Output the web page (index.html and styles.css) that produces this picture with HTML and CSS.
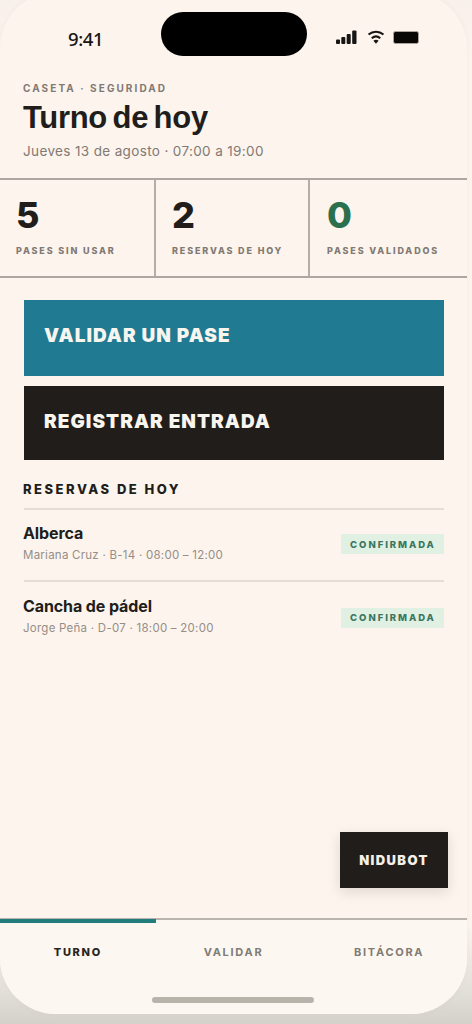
FILE: index.html
```html
<!DOCTYPE html>
<html lang="es">
<head>
<meta charset="utf-8">
<title>Turno de hoy</title>
<link rel="stylesheet" href="styles.css">
</head>
<body>
<main class="phone">
  <div class="status">
    <span class="time">9:41</span>
    <span class="island"></span>
    <svg class="signals" width="84" height="18" viewBox="0 0 84 18">
      <rect x="0" y="11.500" width="4" height="4.500" rx="1"/>
      <rect x="5.3" y="9" width="4" height="7" rx="1"/>
      <rect x="10.7" y="6" width="4" height="10" rx="1"/>
      <rect x="16.2" y="2.5" width="4.3" height="13.5" rx="1"/>
      <g class="waves"><path d="M32.5 6.6C37 2.7 43 2.7 47.500 6.600M35.700 10.200C38.300 8 41.700 8 44.300 10.200"/></g>
      <path d="M37.400 12.700q2.600-1.800 5.200 0L40 15.800z"/>
      <rect class="battery" x="57.500" y="3.500" width="25" height="12" rx="2"/>
    </svg>
  </div>
  <header class="heading">
    <p class="eyebrow">CASETA · SEGURIDAD</p>
    <h1 class="title">Turno de hoy</h1>
    <p class="date">Jueves 13 de agosto · 07:00 a 19:00</p>
  </header>
  <section class="stats">
    <div class="stat"><b class="number">5</b><span class="label">PASES SIN USAR</span></div>
    <div class="stat"><b class="number">2</b><span class="label">RESERVAS DE HOY</span></div>
    <div class="stat"><b class="number green">0</b><span class="label">PASES VALIDADOS</span></div>
  </section>
  <section class="content">
    <button class="action teal">VALIDAR UN PASE</button>
    <button class="action dark">REGISTRAR ENTRADA</button>
    <h2 class="subhead">RESERVAS DE HOY</h2>
    <div class="row">
      <div class="booking"><h3 class="place">Alberca</h3><p class="detail">Mariana Cruz · B-14 · 08:00 – 12:00</p></div>
      <span class="badge">CONFIRMADA</span>
    </div>
    <div class="row">
      <div class="booking"><h3 class="place">Cancha de pádel</h3><p class="detail">Jorge Peña · D-07 · 18:00 – 20:00</p></div>
      <span class="badge">CONFIRMADA</span>
    </div>
  </section>
  <button class="bot">NIDUBOT</button>
  <nav class="tabs">
    <span class="tab active">TURNO</span>
    <span class="tab">VALIDAR</span>
    <span class="tab">BITÁCORA</span>
    <i class="home"></i>
  </nav>
</main>
</body>
</html>
```

FILE: styles.css
```css
* { box-sizing: border-box; margin: 0; }
body {
  width: 472px; height: 1024px; overflow: hidden;
  background: linear-gradient(#f8f0ea 0, #fcf4ed 60px, #fcf4ed 925px, #e3dfd9 990px, #d4d0ca 1024px);
  font-family: Inter, "Liberation Sans", sans-serif; color: #211d1b;
}
.phone {
  width: 467px; height: 1022px; margin-top: -8px; padding-top: 8px;
  background: #fcf4ed; border-radius: 56px; overflow: hidden;
  display: flex; flex-direction: column;
  box-shadow: 0 0 4px #dcd4cd40;
}
.status { height: 79px; padding: 12px 47px 0 68px; display: grid; grid-template-columns: 93px 146px 1fr; }
.time { font: 500 18.5px/24px "Noto Sans", sans-serif; letter-spacing: -.4px; padding-top: 15px; color: #171514; }
.island { height: 44px; border-radius: 22px; background: #000; }
.signals { justify-self: end; margin-top: 16px; fill: #171514; }
.waves { fill: none; stroke: #171514; stroke-width: 2; }
.battery { fill: #080706; stroke: #aaa39d; stroke-width: 1; }
.heading { height: 99px; padding: 3px 23px 0; }
.eyebrow { font-size: 10px; line-height: 12px; font-weight: 700; letter-spacing: 2.08px; color: #817973; white-space: nowrap; }
.title { font: 700 31px/36px "Liberation Sans", sans-serif; letter-spacing: -.3px; word-spacing: -2.8px; margin-top: 6px; color: #211d1b; }
.date { font-size: 13.5px; line-height: 18px; margin-top: 6px; color: #817973; letter-spacing: .36px; white-space: nowrap; }
.stats { height: 100px; border-top: 2px solid #aea6a1; border-bottom: 2px solid #aea6a1; display: grid; grid-template-columns: 156px 154px 157px; }
.stat { padding: 16px 0 0 16px; border-right: 2px solid #b5ada8; }
.stat:last-child { border: 0; padding-left: 17px; }
.number { display: block; font-size: 36px; line-height: 38px; font-weight: 800; letter-spacing: -1px; }
.green { color: #2b704d; }
.label { display: block; font-size: 9px; line-height: 12px; font-weight: 800; color: #817973; margin-top: 11px; white-space: nowrap; letter-spacing: 1.85px; }
.content { padding: 22px 23px 0 24px; }
.action { display: flex; align-items: center; width: 420px; padding: 0 20px 4px; border: 0; color: #f8f4ee; font: 900 19px/24px Inter, sans-serif; letter-spacing: 1.05px; }
.teal { height: 76px; background: #207a92; padding-bottom: 5px; }
.dark { height: 74px; margin-top: 10px; background: #211d1b; padding-bottom: 3px; }
.subhead { font-size: 13px; line-height: 18px; font-weight: 800; letter-spacing: 2.5px; margin: 20px 0 10px -1px; }
.row { height: 72px; border-top: 2px solid #e5dcd6; display: flex; align-items: center; justify-content: space-between; }
.booking { padding-bottom: 6px; }
.place { font-size: 16px; line-height: 22px; font-weight: 650; letter-spacing: -.1px; margin-left: -1px; }
.detail { font-size: 11.5px; line-height: 16px; letter-spacing: .25px; color: #968e88; margin: 3px 0 0 -1px; }
.row + .row { height: 75px; }
.badge { display: flex; align-items: center; justify-content: center; width: 103px; height: 20px; margin-bottom: 2px; background: #e0f1e4; color: #3c765f; font-size: 9.5px; font-weight: 800; letter-spacing: 1.95px; padding-left: 1px; }
.bot { align-self: flex-end; width: 108px; height: 56px; margin: auto 19px 30px 0; padding: 0; border: 0; background: #211d1b; color: #f5efea; font: 900 13px/16px Inter, sans-serif; letter-spacing: 1.4px; box-shadow: 0 4px 12px #211d1b20; }
.tabs { height: 96px; flex: none; position: relative; display: grid; grid-template-columns: repeat(3, 1fr); border-top: 2px solid #b9b5ae; background: #fcf8f1; }
.tab { font-size: 11px; line-height: 12px; font-weight: 700; letter-spacing: 1.7px; color: #817b75; text-align: center; padding-top: 26px; }
.active { color: #292522; border-top: 4px solid #207d7c; margin-top: -1px; padding-top: 23px; font-weight: 800; }
.home { position: absolute; left: 152px; bottom: 11px; width: 162px; height: 6px; border-radius: 3px; background: #b8b4ac; }
```
